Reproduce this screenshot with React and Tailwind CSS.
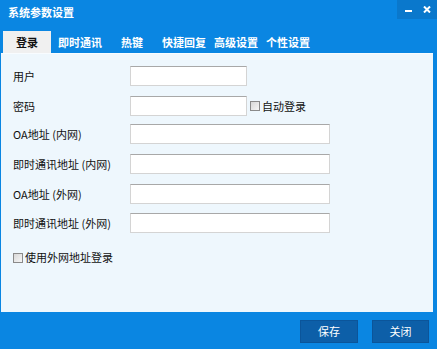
import React from 'react';

const font = { fontFamily: '"Noto Sans CJK SC", "Noto Sans", sans-serif' };

function Field({ label, wide, className = '', children }) {
  return (
    <div className={`flex items-center h-[20px] ${className}`}>
      <span className="w-[129px] shrink-0 pl-[12px] text-[11px] text-[#111] leading-none">{label}</span>
      <div
        className={`h-[20px] shrink-0 bg-white border border-[#d4d4d4] border-t-[#a8a8a8] ${
          wide ? 'w-[200px]' : 'w-[117px]'
        }`}
      />
      {children}
    </div>
  );
}

function CheckBox() {
  return (
    <span className="w-[10px] h-[10px] border border-[#8a8a8a] bg-gradient-to-br from-[#d8d8d8] to-[#f6f6f6] inline-block" />
  );
}

export default function App() {
  return (
    <div className="w-[437px] h-[349px] bg-[#0a86e2] flex flex-col overflow-hidden select-none" style={font}>
      {/* title bar */}
      <div className="h-[31px] flex items-start justify-between">
        <span className="pl-[8px] pt-[7px] text-[11px] font-bold text-white leading-none">系统参数设置</span>
        <div className="w-[40px] h-[19px] bg-[#0a78cc] flex items-center justify-end gap-[11px] pr-[6px]">
          <span className="w-[7px] h-[2px] bg-white mt-[2px]" />
          <svg width="8" height="7" viewBox="0 0 8 7">
            <path d="M1 0.5 L7 6.5 M7 0.5 L1 6.5" stroke="white" strokeWidth="2" />
          </svg>
        </div>
      </div>

      {/* tabs */}
      <div className="h-[22px] flex items-stretch pl-[3px] text-[11px] font-bold leading-none">
        <div className="w-[48px] bg-[#f0f0f0] text-[#111] flex items-center justify-center">登录</div>
        <div className="flex items-center text-white">
          <span className="ml-[7px]">即时通讯</span>
          <span className="ml-[19px]">热键</span>
          <span className="ml-[19px]">快捷回复</span>
          <span className="ml-[8px]">高级设置</span>
          <span className="ml-[8px]">个性设置</span>
        </div>
      </div>

      {/* panel */}
      <div className="h-[259px] ml-[1px] mr-[4px] bg-[#eef7fd] border-t border-[#f8fcff] flex flex-col pt-[12px]">
        <Field label="用户" />
        <Field label="密码" className="mt-[10px]">
          <span className="ml-[3px] flex items-center gap-[2px] text-[11px] text-[#111] leading-none">
            <CheckBox />
            自动登录
          </span>
        </Field>
        <Field label="OA地址 (内网)" wide className="mt-[8px]" />
        <Field label="即时通讯地址 (内网)" wide className="mt-[10px]" />
        <Field label="OA地址 (外网)" wide className="mt-[10px]" />
        <Field label="即时通讯地址 (外网)" wide className="mt-[9px]" />
        <div className="mt-[19px] pl-[12px] flex items-center gap-[2px] text-[11px] text-[#111] leading-none">
          <CheckBox />
          <span>使用外网地址登录</span>
        </div>
      </div>

      {/* bottom bar */}
      <div className="flex-1 flex justify-end items-start pt-[8px] pr-[8px] gap-[14px]">
        <button className="w-[58px] h-[23px] bg-[#0d5fa8] border border-[#0b559a] text-white text-[11px] leading-none">
          保存
        </button>
        <button className="w-[57px] h-[23px] bg-[#0d5fa8] border border-[#0b559a] text-white text-[11px] leading-none">
          关闭
        </button>
      </div>
    </div>
  );
}
